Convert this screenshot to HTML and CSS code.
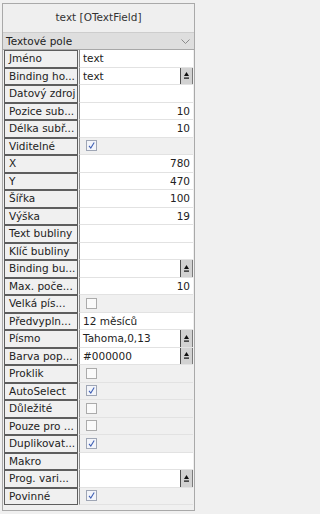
FILE: index.html
```html
<!DOCTYPE html>
<html lang="cs">
<head>
<meta charset="utf-8">
<title>text [OTextField]</title>
<link rel="stylesheet" href="styles.css">
</head>
<body>
<div class="panel">
  <div class="title">text [OTextField]</div>
  <div class="combo">
    <span>Textové pole</span>
    <svg class="chev" width="9" height="5" viewBox="0 0 9 5"><polyline points="0.5,0.5 4.5,4.5 8.5,0.5" fill="none" stroke="#8a8a8a" stroke-width="1"/></svg>
  </div>
  <div class="grid">
    <div class="label">Jméno</div><div class="value field">text</div>
    <div class="label">Binding ho...</div><div class="value field btn"><span>text</span><i class="pick"><svg width="5" height="7" viewBox="0 0 5 7"><path d="M2.5 0 L5 4 L0 4 Z" fill="#111"/><rect x="0" y="5.5" width="5" height="1.2" fill="#111"/></svg></i></div>
    <div class="label">Datový zdroj</div><div class="value field"></div>
    <div class="label">Pozice sub...</div><div class="value field num">10</div>
    <div class="label">Délka subř...</div><div class="value field num">10</div>
    <div class="label">Viditelné</div><div class="value"><span class="cb on"><svg width="9" height="9" viewBox="0 0 9 9"><path d="M2 4.8 L3.8 7 L7.2 1.5" fill="none" stroke="#3f5fb5" stroke-width="1.1"/></svg></span></div>
    <div class="label">X</div><div class="value field num">780</div>
    <div class="label">Y</div><div class="value field num">470</div>
    <div class="label">Šířka</div><div class="value field num">100</div>
    <div class="label">Výška</div><div class="value field num">19</div>
    <div class="label">Text bubliny</div><div class="value field"></div>
    <div class="label">Klíč bubliny</div><div class="value field"></div>
    <div class="label">Binding bu...</div><div class="value field btn"><span></span><i class="pick"><svg width="5" height="7" viewBox="0 0 5 7"><path d="M2.5 0 L5 4 L0 4 Z" fill="#111"/><rect x="0" y="5.5" width="5" height="1.2" fill="#111"/></svg></i></div>
    <div class="label">Max. poče...</div><div class="value field num">10</div>
    <div class="label">Velká pís...</div><div class="value"><span class="cb"></span></div>
    <div class="label">Předvypln...</div><div class="value field">12 měsíců</div>
    <div class="label">Písmo</div><div class="value field btn"><span>Tahoma,0,13</span><i class="pick"><svg width="5" height="7" viewBox="0 0 5 7"><path d="M2.5 0 L5 4 L0 4 Z" fill="#111"/><rect x="0" y="5.5" width="5" height="1.2" fill="#111"/></svg></i></div>
    <div class="label">Barva pop...</div><div class="value field btn"><span>#000000</span><i class="pick"><svg width="5" height="7" viewBox="0 0 5 7"><path d="M2.5 0 L5 4 L0 4 Z" fill="#111"/><rect x="0" y="5.5" width="5" height="1.2" fill="#111"/></svg></i></div>
    <div class="label">Proklik</div><div class="value"><span class="cb"></span></div>
    <div class="label">AutoSelect</div><div class="value"><span class="cb on"><svg width="9" height="9" viewBox="0 0 9 9"><path d="M2 4.8 L3.8 7 L7.2 1.5" fill="none" stroke="#3f5fb5" stroke-width="1.1"/></svg></span></div>
    <div class="label">Důležité</div><div class="value"><span class="cb"></span></div>
    <div class="label">Pouze pro ...</div><div class="value"><span class="cb"></span></div>
    <div class="label">Duplikovat...</div><div class="value"><span class="cb on"><svg width="9" height="9" viewBox="0 0 9 9"><path d="M2 4.8 L3.8 7 L7.2 1.5" fill="none" stroke="#3f5fb5" stroke-width="1.1"/></svg></span></div>
    <div class="label">Makro</div><div class="value field"></div>
    <div class="label">Prog. vari...</div><div class="value field btn"><span></span><i class="pick"><svg width="5" height="7" viewBox="0 0 5 7"><path d="M2.5 0 L5 4 L0 4 Z" fill="#111"/><rect x="0" y="5.5" width="5" height="1.2" fill="#111"/></svg></i></div>
    <div class="label">Povinné</div><div class="value"><span class="cb on"><svg width="9" height="9" viewBox="0 0 9 9"><path d="M2 4.8 L3.8 7 L7.2 1.5" fill="none" stroke="#3f5fb5" stroke-width="1.1"/></svg></span></div>
  </div>
</div>
</body>
</html>
```

FILE: styles.css
```css
html, body {
  margin: 0;
  padding: 0;
  background: #f0f0f0;
}
body {
  font-family: "DejaVu Sans", "Liberation Sans", sans-serif;
  font-size: 10.5px;
  color: #222;
  width: 200px;
  height: 514px;
  overflow: hidden;
}
.panel {
  box-sizing: border-box;
  margin: 3px 5px 0 2px;
  height: 508px;
  border: 1px solid #a9a9a9;
  background: #f0f0f0;
  display: flex;
  flex-direction: column;
}
.title {
  height: 28px;
  line-height: 27px;
  text-align: center;
  color: #333;
  background: #efefef;
}
.combo {
  box-sizing: border-box;
  height: 18px;
  background: #dedede;
  border-top: 1px solid #cdcdcd;
  border-bottom: 1px solid #a8a8a8;
  display: flex;
  align-items: center;
  justify-content: space-between;
  padding: 0 4px 0 3px;
  color: #222;
}
.chev {
  display: block;
}
.grid {
  display: grid;
  grid-template-columns: 74px 114px;
  column-gap: 1px;
  grid-auto-rows: 17.5px;
  padding: 0 1px 0 1px;
}
.label {
  box-sizing: border-box;
  border: 1px solid #5e5e5e;
  background: #f0f0f0;
  padding-left: 4px;
  line-height: 15px;
  white-space: nowrap;
  overflow: hidden;
}
.value {
  box-sizing: border-box;
  border-left: 1px solid #8c8c8c;
  border-bottom: 1px solid #e2e2e2;
  display: flex;
  align-items: center;
  padding-left: 3px;
  white-space: nowrap;
  overflow: hidden;
}
.field {
  background: #fff;
}
.num {
  justify-content: flex-end;
  padding-right: 3px;
}
.btn {
  padding-right: 0;
  justify-content: space-between;
}
.pick {
  box-sizing: border-box;
  width: 13px;
  height: 100%;
  background: #d2d2d2;
  border-left: 1px solid #505050;
  border-right: 1px solid #7a7a7a;
  display: flex;
  align-items: center;
  justify-content: center;
}
.pick svg {
  display: block;
}
.cb {
  box-sizing: border-box;
  width: 11px;
  height: 11px;
  margin-left: 3px;
  border: 1px solid #ababab;
  background: #fafafa;
  display: flex;
  align-items: center;
  justify-content: center;
}
.cb.on {
  background: #f3f5fa;
  border-color: #9fa6b5;
}
.cb svg {
  display: block;
}
```
